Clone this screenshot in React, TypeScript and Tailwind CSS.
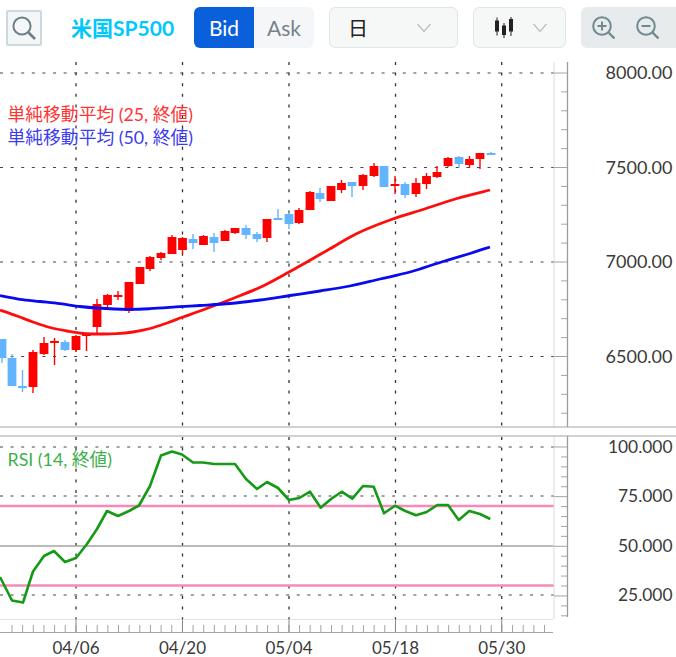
const FONT = "font-['Lato','Noto_Sans_CJK_JP',sans-serif]";

// [x, body top, body bottom, wick top, wick bottom, up]
const candles: [number, number, number, number, number, boolean][] = [
  [2, 339, 358, 339, 363, false],
  [12, 358, 386, 354, 386, false],
  [22.5, 386, 388, 370, 392, false],
  [33, 352, 387, 350, 393, true],
  [44, 343, 354, 337, 355, true],
  [54.5, 341, 343, 338, 365, true],
  [65, 342, 350, 340, 351, false],
  [76, 336, 350, 335, 352, true],
  [86.5, 334, 336, 333, 351, true],
  [97, 304, 327, 299, 333, true],
  [107.5, 295, 305, 294, 309, true],
  [118, 295, 297, 291, 300, true],
  [129, 282, 311, 282, 313, true],
  [140, 267, 284, 267, 284, true],
  [150, 257, 269, 256, 271, true],
  [161, 253, 258, 252, 260, true],
  [172, 237, 254, 235, 254, true],
  [182.5, 238, 250, 237, 254, true],
  [193, 239, 243, 234, 249, false],
  [203.5, 236, 245, 235, 245, true],
  [214, 237, 243, 233, 252, false],
  [225, 231, 241, 230, 241, true],
  [235, 228, 233, 228, 234, true],
  [246, 228, 235, 225, 239, false],
  [257, 234, 239, 232, 242, false],
  [267, 219, 238, 219, 242, true],
  [278, 218, 220, 209, 220, false],
  [289, 214, 224, 212, 229, false],
  [299, 210, 223, 208, 224, true],
  [310, 192, 210, 191, 210, true],
  [320, 193, 199, 188, 202, false],
  [331, 186, 201, 186, 201, true],
  [341.5, 183, 190, 180, 193, true],
  [352, 182, 186, 182, 197, false],
  [363, 175, 186, 174, 190, true],
  [374, 166, 176, 163, 177, true],
  [384, 166, 187, 166, 187, false],
  [395, 184, 186, 176, 194, true],
  [405, 184, 195, 182, 198, false],
  [416, 183, 194, 178, 197, true],
  [426.5, 176, 184, 173, 189, true],
  [437, 172, 177, 166, 178, true],
  [448, 158, 166, 157, 167, true],
  [459, 157, 164, 156, 168, false],
  [469.5, 159, 165, 156, 168, true],
  [480, 153, 159, 153, 169, true],
  [491, 153, 155, 152, 155, false],
];

const red25: [number, number][] = [
  [0, 310], [17, 316], [33, 322], [50, 327.5], [67, 331], [83, 333.5], [100, 334], [117, 333.7], [133, 332],
  [150, 328.5], [167, 323], [183, 317], [200, 311], [233, 298.5], [263, 286], [290, 271.5], [327, 250.5],
  [357, 233.5], [390, 220], [423, 209.5], [457, 198.5], [490, 190],
];
const blue50: [number, number][] = [
  [0, 295.7], [20, 299.3], [40, 301.5], [60, 303.7], [80, 306.5], [97, 308], [127, 309.3], [150, 308.7], [180, 306.7],
  [200, 305.5], [230, 303.5], [260, 300], [290, 295.5], [320, 291], [350, 286], [380, 279], [410, 272], [440, 262.5],
  [470, 253.5], [490, 247],
];
const rsi14 =
  "0,577 12,600.5 23,602.5 33,571.5 44,556 54,551 65,562 76,558 87,544 97,529 107,511 118,516 129,511 139,505.5 150,486 161,455.5 172,451.5 182,454.5 193,462.5 203,462.5 214,464 225,464 235,464 246,479 257,489 267,482 278,488 289,500 299.3,498 310,491.7 320.7,507.7 331,499 341.7,491.7 352.3,498.7 363,486 373.7,486.7 384,513.3 395,505.7 405.3,511 416,515.3 426.7,512 437.3,505 448,505 458.7,520 469.3,511 480,514 490.3,519";

// smooth line through the sampled points
const smooth = (p: [number, number][]) => {
  let d = "M" + p[0][0] + " " + p[0][1];
  for (let i = 0; i < p.length - 1; i++) {
    const a = p[i - 1] ?? p[i];
    const b = p[i];
    const c = p[i + 1];
    const e = p[i + 2] ?? c;
    const c1x = b[0] + (c[0] - a[0]) / 6;
    const c1y = b[1] + (c[1] - a[1]) / 6;
    const c2x = c[0] - (e[0] - b[0]) / 6;
    const c2y = c[1] - (e[1] - b[1]) / 6;
    d += " C" + c1x + " " + c1y + " " + c2x + " " + c2y + " " + c[0] + " " + c[1];
  }
  return d;
};

const vGrid = [76, 182.5, 289, 395.5, 501.7];
const priceY = [73, 167.5, 262, 356.5];
const priceLabels = ["8000.00", "7500.00", "7000.00", "6500.00"];
const rsiLabels: [number, string][] = [
  [447, "100.000"],
  [496, "75.000"],
  [546, "50.000"],
  [595, "25.000"],
];
const dates: [number, string][] = [
  [76, "04/06"],
  [182.5, "04/20"],
  [289, "05/04"],
  [395.5, "05/18"],
  [501.7, "05/30"],
];

const range = (n: number, f: (i: number) => number) => Array.from({ length: n }, (_, i) => f(i));
const priceTicks = range(19, (i) => 73 + i * 18.9);
const rsiTicks = range(18, (i) => 447 + i * 9.93);
const timeTicks = range(52, (i) => 12 + i * 10.65).filter((x) => x < 552);

const Chevron = () => (
  <svg width="16" height="10" viewBox="0 0 16 10" fill="none" stroke="#b9c3c7" strokeWidth="1.4">
    <path d="M1.5 1 L8 8.5 L14.5 1" />
  </svg>
);

const Chart = () => (
  <svg width="676" height="595" viewBox="0 62 676 595" className="block">
    {/* grid */}
    {priceY.map((y) => (
      <line key={y} x1="0" x2="554" y1={y} y2={y} stroke="#444" strokeDasharray="3 7.6" />
    ))}
    {vGrid.map((x) => (
      <g key={x}>
        <line x1={x} x2={x} y1="62" y2="426" stroke="#333" strokeWidth="1.3" strokeDasharray="3 7.6" />
        <line x1={x} x2={x} y1="437" y2="620" stroke="#333" strokeWidth="1.3" strokeDasharray="3 7.6" />
      </g>
    ))}
    {[447, 496, 595].map((y) => (
      <line key={y} x1="0" x2="554" y1={y} y2={y} stroke="#444" strokeDasharray="3 7.6" />
    ))}
    <line x1="0" x2="554" y1="546" y2="546" stroke="#a3a3a3" strokeWidth="1.3" />
    <line x1="0" x2="554" y1="506" y2="506" stroke="#f78ab8" strokeWidth="2.4" />
    <line x1="0" x2="554" y1="585.5" y2="585.5" stroke="#f78ab8" strokeWidth="2.4" />

    {/* candles */}
    {candles.map(([x, top, bottom, wt, wb, up]) => {
      const c = up ? "#ff0000" : "#63b4ff";
      return (
        <g key={x}>
          <line x1={x} x2={x} y1={wt} y2={wb} stroke={c} strokeWidth="1.4" />
          <rect x={x - 4.4} y={top} width="8.8" height={bottom - top} fill={c} />
        </g>
      );
    })}
    <path d={smooth(red25)} fill="none" stroke="#ff0d0d" strokeWidth="2.8" />
    <path d={smooth(blue50)} fill="none" stroke="#0a0aee" strokeWidth="2.8" />
    <polyline points={rsi14} fill="none" stroke="#159a15" strokeWidth="2.6" strokeLinejoin="round" />

    {/* axes */}
    <line x1="554" x2="554" y1="62" y2="427" stroke="#dcdcdc" />
    <line x1="554" x2="554" y1="436" y2="619" stroke="#dcdcdc" />
    <line x1="567.5" x2="567.5" y1="62" y2="427" stroke="#9a9a9a" strokeWidth="1.3" />
    <line x1="567.5" x2="567.5" y1="436" y2="617" stroke="#9a9a9a" strokeWidth="1.3" />
    {priceTicks.map((y, i) => (
      <line key={y} x1={i % 5 === 0 ? 554 : 561} x2="567" y1={y} y2={y} stroke="#a5a5a5" />
    ))}
    {rsiTicks.map((y, i) => (
      <line key={y} x1={i % 5 === 0 ? 554 : 561} x2="567" y1={y} y2={y} stroke="#a5a5a5" />
    ))}
    <line x1="0" x2="676" y1="427" y2="427" stroke="#a3a3a3" strokeWidth="1.2" />
    <line x1="0" x2="676" y1="436" y2="436" stroke="#a3a3a3" strokeWidth="1.2" />
    <line x1="0" x2="553" y1="619.5" y2="619.5" stroke="#e2e2e2" />
    <line x1="0" x2="553" y1="632.5" y2="632.5" stroke="#a3a3a3" strokeWidth="1.2" />
    {timeTicks.map((x) => (
      <line key={x} x1={x} x2={x} y1="625" y2="632" stroke="#a3a3a3" />
    ))}
    {vGrid.map((x) => (
      <line key={x} x1={x} x2={x} y1="619" y2="632" stroke="#8a8a8a" />
    ))}

    {/* labels */}
    <g className={FONT} fill="#3a3a3a">
      {priceY.map((y, i) => (
        <text key={y} x="672.5" y={y + 6} textAnchor="end" fontSize="18">{priceLabels[i]}</text>
      ))}
      {rsiLabels.map(([y, t]) => (
        <text key={y} x="672.5" y={y + 5.5} textAnchor="end" fontSize="17.4">{t}</text>
      ))}
      {dates.map(([x, t]) => (
        <text key={x} x={x} y="653.5" textAnchor="middle" fontSize="17">{t}</text>
      ))}
    </g>
    <g className={FONT} fontSize="17.8">
      <text x="7.5" y="120.5" fill="#ff3333">単純移動平均 (25, 終値)</text>
      <text x="7.5" y="143.5" fill="#3b3bf0">単純移動平均 (50, 終値)</text>
      <text x="7.5" y="465.5" fill="#3cb04a">RSI (14, 終値)</text>
    </g>
  </svg>
);

const App = () => (
  <div className={"w-[676px] h-[657px] overflow-hidden bg-white " + FONT}>
    <div className="h-[62px] flex items-start pt-[7px] pl-[6px]">
      <button className="w-[36px] h-[36px] mt-[3px] flex items-center justify-center bg-[#f5f6f7] border-2 border-[#c9d9de] rounded-[2px]">
        <svg width="26" height="26" viewBox="0 0 26 26" fill="none" stroke="#6b8087" strokeWidth="2">
          <circle cx="11" cy="11" r="8.6" />
          <path d="M17.5 17.5 L24 24" strokeWidth="2.6" />
        </svg>
      </button>
      <div className="w-[152px] h-[41px] flex items-center pl-[29px] text-[21px] font-bold text-[#00c8ff]">米国SP500</div>
      <div className="flex h-[41px] w-[120px] rounded-[6px] overflow-hidden text-[21px]">
        <div className="w-[60px] flex items-center justify-center bg-[#0a5fdb] text-white">Bid</div>
        <div className="w-[60px] flex items-center justify-center bg-[#f5f6f7] text-[#75838a]">Ask</div>
      </div>
      <div className="ml-[15px] w-[129px] h-[41px] flex items-center justify-between pl-[18px] pr-[25px] bg-[#f6f7f7] border border-[#dfe6ea] rounded-[6px]">
        <span className="text-[20px] text-[#222]">日</span>
        <Chevron />
      </div>
      <div className="ml-[15px] w-[93px] h-[41px] flex items-center justify-between pl-[20px] pr-[17px] bg-[#f6f7f7] border border-[#dfe6ea] rounded-[6px]">
        <svg width="20" height="22" viewBox="0 0 20 22" fill="#222">
          <path d="M2.5 0.5h1v3H5v11H3.5v4h-1v-4H1v-11h1.5z" />
          <path d="M9.5 6h1v2.5H12V18h-1.5v3h-1v-3H8V8.5h1.5z" />
          <path d="M16.5 0h1v2H19v12.5h-1.5V19h-1v-4.5H15V2h1.5z" />
        </svg>
        <Chevron />
      </div>
      <div className="ml-[15px] flex-1 h-[41px] flex items-center gap-[21px] pl-[11px] bg-[#e8ebec] rounded-l-[6px]">
        <svg width="23" height="23" viewBox="0 0 23 23" fill="none" stroke="#6f8a90" strokeWidth="2">
          <circle cx="10" cy="10" r="8.8" />
          <path d="M10 5.5v9M5.5 10h9" />
          <path d="M16.5 16.5 L22.5 22.5" strokeWidth="2.4" />
        </svg>
        <svg width="23" height="23" viewBox="0 0 23 23" fill="none" stroke="#6f8a90" strokeWidth="2">
          <circle cx="10" cy="10" r="8.8" />
          <path d="M5.5 10h9" />
          <path d="M16.5 16.5 L22.5 22.5" strokeWidth="2.4" />
        </svg>
      </div>
    </div>
    <Chart />
  </div>
);

export default App;
